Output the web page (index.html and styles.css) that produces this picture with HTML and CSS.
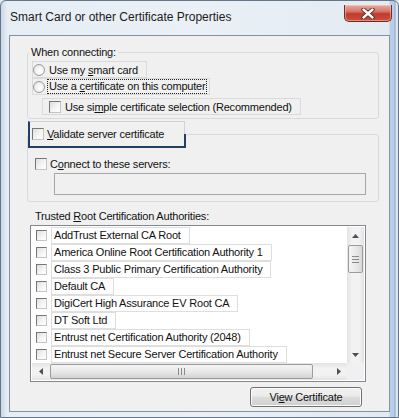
FILE: index.html
```html
<!DOCTYPE html>
<html lang="en">

<head>
  <meta charset="UTF-8">
  <title>Smart Card or other Certificate Properties</title>
  <link rel="stylesheet" href="styles.css">
</head>

<body>
  <div class="window">
    <div class="titlebar">
      <span class="title">Smart Card or other Certificate Properties</span>
      <div class="close">
        <svg width="14" height="11" viewBox="0 0 14 11">
          <path d="M2.5 1.5 L11.5 9.5 M11.5 1.5 L2.5 9.5" stroke="#5a1e16" stroke-width="4.2" stroke-linecap="round" />
          <path d="M2.5 1.5 L11.5 9.5 M11.5 1.5 L2.5 9.5" stroke="#fff" stroke-width="2.4" stroke-linecap="round" />
        </svg>
      </div>
    </div>

    <div class="panel">
      <fieldset class="group connecting">
        <legend>When connecting:</legend>
        <div class="opt"><span class="radio"></span><span>Use my <u>s</u>mart card</span></div>
        <div class="opt wide"><span class="radio"></span><span class="focus">Use a <u>c</u>ertificate on this computer</span></div>
        <div class="opt sub"><span class="check"></span><span>Use si<u>m</u>ple certificate selection (Recommended)</span></div>
      </fieldset>

      <fieldset class="group validate">
        <legend><span class="check"></span><span><u>V</u>alidate server certificate</span></legend>
        <div class="opt plain"><span class="check"></span><span>C<u>o</u>nnect to these servers:</span></div>
        <div class="field"></div>
      </fieldset>

      <div class="list-label">Trusted <u>R</u>oot Certification Authorities:</div>
      <div class="listbox">
        <ul class="certs">
          <li><span class="check"></span><span class="name">AddTrust External CA Root</span></li>
          <li><span class="check"></span><span class="name">America Online Root Certification Authority 1</span></li>
          <li><span class="check"></span><span class="name">Class 3 Public Primary Certification Authority</span></li>
          <li><span class="check"></span><span class="name">Default CA</span></li>
          <li><span class="check"></span><span class="name">DigiCert High Assurance EV Root CA</span></li>
          <li><span class="check"></span><span class="name">DT Soft Ltd</span></li>
          <li><span class="check"></span><span class="name">Entrust net Certification Authority (2048)</span></li>
          <li><span class="check"></span><span class="name">Entrust net Secure Server Certification Authority</span></li>
        </ul>
        <div class="vscroll">
          <div class="sbtn"><svg width="7" height="4" viewBox="0 0 7 4"><path d="M0 4 L3.5 0 L7 4Z" fill="#505050" /></svg></div>
          <div class="vthumb"><span class="grip-h"></span></div>
          <div class="track"></div>
          <div class="sbtn"><svg width="7" height="4" viewBox="0 0 7 4"><path d="M0 0 L3.5 4 L7 0Z" fill="#505050" /></svg></div>
        </div>
        <div class="hscroll">
          <div class="sbtn"><svg width="4" height="7" viewBox="0 0 4 7"><path d="M4 0 L0 3.5 L4 7Z" fill="#505050" /></svg></div>
          <div class="hthumb"><span class="grip-v"></span></div>
          <div class="track"></div>
          <div class="sbtn"><svg width="4" height="7" viewBox="0 0 4 7"><path d="M0 0 L4 3.5 L0 7Z" fill="#505050" /></svg></div>
        </div>
        <div class="corner"></div>
      </div>

      <div class="actions">
        <button class="btn">Vi<u>e</u>w Certificate</button>
      </div>
    </div>
  </div>
</body>

</html>
```

FILE: styles.css
```css
html,
body {
  width: 100%;
  height: 100%;
  padding: 0;
  margin: 0;
}

body {
  font-family: "Liberation Sans", Arial, sans-serif;
  font-size: 11px;
  letter-spacing: -0.2px;
  color: #111;
  background: #dfe8f1;
}

.window {
  box-sizing: border-box;
  height: 100%;
  display: flex;
  flex-direction: column;
  padding: 0 8px;
  border: 1px solid #66768a;
  border-radius: 6px 6px 0 0;
  overflow: hidden;
  background: linear-gradient(90deg, #c9d8e8 0, #e6edf4 6px, #eaf0f6 50%, #e3eaf2 calc(100% - 9px), #b7cfea calc(100% - 8px), #b7cfea calc(100% - 4px), #8fa4bb calc(100% - 3px), #dde6ef calc(100% - 2px));
}

.titlebar {
  height: 34px;
  flex: none;
  display: flex;
  justify-content: space-between;
  align-items: flex-start;
}

.title {
  margin: 9px 0 0 1px;
  font-size: 12px;
  line-height: 14px;
  letter-spacing: 0;
  color: #1b1b1b;
}

.close {
  width: 48px;
  height: 17px;
  margin: 4px -2px 0 0;
  box-sizing: border-box;
  display: flex;
  align-items: center;
  justify-content: center;
  border: 1px solid #6c2d25;
  border-top: none;
  border-radius: 0 0 5px 5px;
  background: linear-gradient(#e9aca3 0, #d6766a 40%, #c13a2c 55%, #c9503f 100%);
  box-shadow: inset 0 0 0 1px rgba(255, 220, 210, 0.45);
}

.panel {
  flex: 1;
  margin-bottom: 5px;
  padding: 9px 10px 0 17px;
  border: 1px solid #8391a2;
  background: #f0f0f0;
}

.group {
  margin: 0;
  padding: 0 0 3px;
  min-width: 0;
  border: 1px solid #d5dadf;
  border-radius: 3px;
}

.connecting legend {
  margin-left: 1px;
  padding: 0 2px;
  line-height: 14px;
}

.opt {
  box-sizing: border-box;
  width: fit-content;
  height: 17px;
  display: flex;
  align-items: center;
  gap: 4px;
  margin-left: 4px;
  padding: 0 8px 0 0;
  border: 1px solid #dadada;
}

.connecting .opt:first-of-type {
  margin-top: 2px;
}

.opt.wide {
  padding-right: 2px;
}

.opt.sub {
  margin: 3px 0 0 14px;
  padding-left: 6px;
}

.opt.plain {
  margin: 7px 0 0 6px;
  border-color: transparent;
  gap: 3px;
}

.focus {
  margin-left: -2px;
  padding: 0 1px;
  line-height: 13px;
  border: 1px dotted #222;
}

.radio {
  width: 12px;
  height: 12px;
  flex: none;
  box-sizing: border-box;
  border-radius: 50%;
  border: 1px solid #9a9a9a;
  background: radial-gradient(circle at 60% 60%, #fff 0, #f3f3f3 45%, #d8d8d8 100%);
}

.check {
  width: 12px;
  height: 12px;
  flex: none;
  box-sizing: border-box;
  border: 1px solid;
  border-color: #767676 #c4c4c4 #c4c4c4 #767676;
  background: linear-gradient(135deg, #dedede 0, #f6f6f6 60%, #fff 100%);
}

.validate {
  margin-top: 2px;
  padding-bottom: 6px;
}

.validate legend {
  position: relative;
  box-sizing: border-box;
  width: 157px;
  height: 27px;
  display: flex;
  align-items: center;
  gap: 3px;
  margin: 0;
  padding: 0 0 0 2px;
  border-top: 1px solid #d0d4d8;
  border-left: 2px solid #233f63;
  border-bottom: 2px solid #233f63;
  border-right: 1px solid #d0d4d8;
}

.validate legend::after {
  content: "";
  position: absolute;
  right: -2px;
  bottom: -2px;
  width: 2px;
  height: 14px;
  background: #233f63;
}

.field {
  height: 22px;
  margin: 1px 12px 0 26px;
  box-sizing: border-box;
  border: 1px solid #a6a6a6;
  background: #f0f0f0;
}

.list-label {
  margin: 7px 0 0 8px;
  line-height: 14px;
}

.listbox {
  box-sizing: border-box;
  height: 157px;
  margin: 2px 13px 0 3px;
  padding: 1px;
  border: 1px solid #828790;
  background: #fff;
  display: grid;
  grid-template-columns: 1fr 17px;
  grid-template-rows: 1fr 17px;
}

.certs {
  list-style: none;
  margin: 0;
  padding: 0;
  overflow: hidden;
}

.certs li {
  height: 17px;
  display: flex;
  align-items: center;
  gap: 4px;
  padding-left: 4px;
  white-space: nowrap;
}

.certs .check {
  width: 11px;
  height: 11px;
}

.certs .name {
  box-sizing: border-box;
  height: 17px;
  line-height: 15px;
  padding: 0 8px 0 2px;
  border: 1px solid #dedede;
}

.vscroll,
.hscroll {
  display: flex;
  background: linear-gradient(90deg, #e3e3e3, #f2f2f2 30%, #f2f2f2 70%, #e3e3e3);
}

.vscroll {
  flex-direction: column;
}

.hscroll {
  background: linear-gradient(#e3e3e3, #f2f2f2 30%, #f2f2f2 70%, #e3e3e3);
}

.sbtn {
  width: 17px;
  height: 17px;
  flex: none;
  display: flex;
  align-items: center;
  justify-content: center;
}

.track {
  flex: 1;
}

.vthumb,
.hthumb {
  box-sizing: border-box;
  flex: none;
  display: flex;
  align-items: center;
  justify-content: center;
  border: 1px solid #9c9c9c;
  border-radius: 2px;
}

.vthumb {
  height: 28px;
  margin: 1px 1px 0;
  background: linear-gradient(90deg, #f4f4f4, #e9e9e9 50%, #d8d8d8);
}

.hthumb {
  width: 263px;
  margin: 1px 0 1px 1px;
  background: linear-gradient(#f4f4f4, #e9e9e9 50%, #d2d2d2);
}

.grip-h {
  width: 7px;
  height: 7px;
  background: repeating-linear-gradient(#8a8a8a 0 1px, transparent 1px 3px);
}

.grip-v {
  width: 7px;
  height: 7px;
  background: repeating-linear-gradient(90deg, #8a8a8a 0 1px, transparent 1px 3px);
}

.corner {
  background: #f0f0f0;
}

.actions {
  display: flex;
  justify-content: flex-end;
  margin: 5px 17px 0 0;
}

.btn {
  width: 112px;
  height: 20px;
  padding: 0;
  font-family: inherit;
  font-size: 11px;
  letter-spacing: -0.2px;
  color: #111;
  border: 1px solid #707070;
  border-radius: 3px;
  background: linear-gradient(#f2f2f2 0, #ebebeb 45%, #dddddd 50%, #cfcfcf 100%);
  box-shadow: inset 0 0 0 1px #fbfbfb;
}
```
